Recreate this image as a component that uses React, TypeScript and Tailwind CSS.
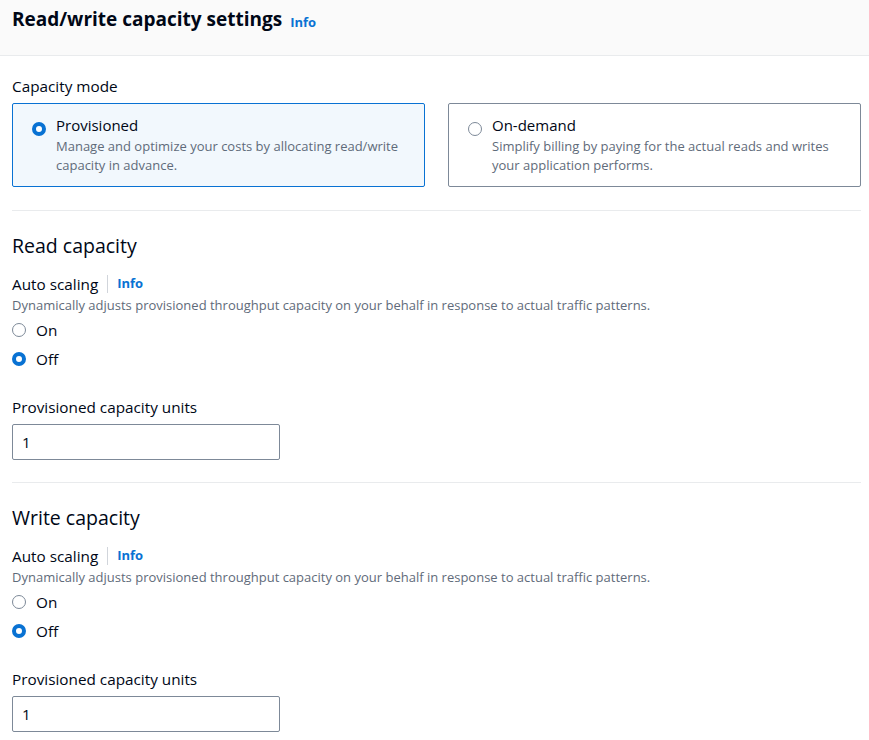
import React from "react";

const font = { fontFamily: '"Open Sans", "Noto Sans", Arial, sans-serif' };

function Radio({ checked }: { checked: boolean }) {
  return checked ? (
    <span className="inline-block w-[14px] h-[14px] rounded-full border-[4px] border-[#0972d3] bg-white shrink-0" />
  ) : (
    <span className="inline-block w-[14px] h-[14px] rounded-full border-[1.5px] border-[#7d8998] bg-white shrink-0" />
  );
}

function Info() {
  return <span className="text-[13px] font-bold text-[#0972d3]">Info</span>;
}

function CapacitySection({ title }: { title: string }) {
  return (
    <div className="flex flex-col">
      <div className="text-[19.5px] leading-[22px] text-[#000716] mt-[24px]">{title}</div>
      <div className="flex items-center mt-[17px] h-[20px]">
        <span className="text-[15.3px] text-[#000716]">Auto scaling</span>
        <span className="w-px h-[18px] bg-[#d1d5db] mx-[9px]" />
        <Info />
      </div>
      <div className="text-[13px] leading-[18px] text-[#5f6b7a] mt-[2px]">
        Dynamically adjusts provisioned throughput capacity on your behalf in response to actual traffic patterns.
      </div>
      <div className="flex flex-col gap-[9px] mt-[6px]">
        <label className="flex items-center gap-[10px] h-[20px]">
          <Radio checked={false} />
          <span className="text-[15.3px] text-[#000716]">On</span>
        </label>
        <label className="flex items-center gap-[10px] h-[20px]">
          <Radio checked={true} />
          <span className="text-[15.3px] text-[#000716]">Off</span>
        </label>
      </div>
      <div className="text-[15.3px] leading-[20px] text-[#000716] mt-[28px]">Provisioned capacity units</div>
      <div className="mt-[7px] w-[268px] h-[36px] border border-[#7d8998] rounded-[2px] flex items-center px-[9px] text-[15px] text-[#000716]">
        1
      </div>
    </div>
  );
}

export default function App() {
  return (
    <div className="w-[869px] h-[740px] bg-white overflow-hidden" style={font}>
      <div className="h-[56px] bg-[#fafafa] border-b border-[#e9ebed] flex items-start px-[12px] pt-[6px]">
        <span className="text-[19px] leading-[26px] font-bold text-[#000716]">Read/write capacity settings</span>
        <span className="ml-[8px] mt-[5px] leading-[20px]"><Info /></span>
      </div>
      <div className="pl-[12px] pr-[8px]">
        <div className="text-[15.3px] leading-[20px] text-[#000716] mt-[20px]">Capacity mode</div>
        <div className="grid grid-cols-2 gap-[23px] mt-[7px]">
          <div className="h-[84px] border border-[#0972d3] bg-[#f2f8fd] rounded-[2px] flex gap-[10px] pl-[19px] pr-[12px] pt-[11px]">
            <div className="mt-[3px]"><Radio checked={true} /></div>
            <div className="flex flex-col">
              <span className="text-[15px] leading-[20px] text-[#000716]">Provisioned</span>
              <span className="text-[13px] leading-[19px] text-[#5f6b7a] mt-[2px]">
                Manage and optimize your costs by allocating read/write capacity in advance.
              </span>
            </div>
          </div>
          <div className="h-[84px] border border-[#7d8998] bg-white rounded-[2px] flex gap-[10px] pl-[19px] pr-[20px] pt-[11px]">
            <div className="mt-[3px]"><Radio checked={false} /></div>
            <div className="flex flex-col">
              <span className="text-[15px] leading-[20px] text-[#000716]">On-demand</span>
              <span className="text-[13px] leading-[19px] text-[#5f6b7a] mt-[2px]">
                Simplify billing by paying for the actual reads and writes your application performs.
              </span>
            </div>
          </div>
        </div>
        <div className="h-px bg-[#e9ebed] mt-[23px]" />
        <CapacitySection title="Read capacity" />
        <div className="h-px bg-[#e9ebed] mt-[22px]" />
        <CapacitySection title="Write capacity" />
      </div>
    </div>
  );
}
